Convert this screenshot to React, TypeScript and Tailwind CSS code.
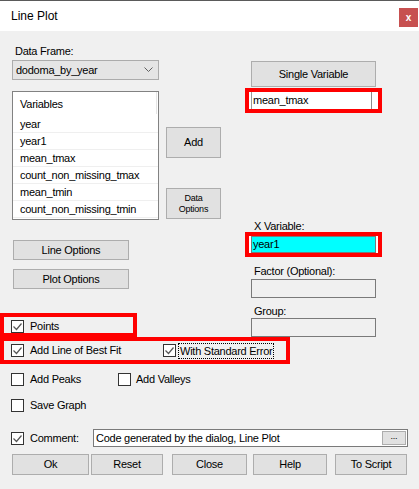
import { ReactNode } from "react";

function Check({ checked }: { checked?: boolean }) {
  return (
    <span className="w-[13px] h-[13px] shrink-0 border border-[#333333] bg-white flex items-center justify-center">
      {checked && (
        <svg width="11" height="11" viewBox="0 0 11 11">
          <path d="M1.5 5.5 L4.5 8.5 L9.5 2.5" fill="none" stroke="#555555" strokeWidth="1.2" />
        </svg>
      )}
    </span>
  );
}

function Btn({ children, className = "" }: { children: ReactNode; className?: string }) {
  return (
    <div
      className={`bg-[#e1e1e1] border border-[#adadad] flex items-center justify-center text-center ${className}`}
    >
      {children}
    </div>
  );
}

const variables = [
  "year",
  "year1",
  "mean_tmax",
  "count_non_missing_tmax",
  "mean_tmin",
  "count_non_missing_tmin",
];

export default function App() {
  return (
    <div className="w-[419px] h-[489px] overflow-hidden bg-[#f0f0f0] border-t border-[#5a5a5a] font-['Liberation_Sans',Arial,sans-serif] text-[11px] leading-[13px] tracking-[-0.25px] text-black">
      {/* title bar */}
      <div className="h-[30px] bg-white flex items-start justify-between pl-[11px] pr-[1px]">
        <span className="text-[12px] leading-[14px] mt-[8px] tracking-normal">Line Plot</span>
        <div className="w-[19px] h-[19px] mt-[7px] bg-[#c75050] flex items-center justify-center text-white text-[10px] font-bold leading-none">
          x
        </div>
      </div>

      {/* top section */}
      <div className="flex">
        {/* left column */}
        <div className="w-[245px] flex flex-col">
          <div className="pl-[15px] mt-[13px] h-[14px] leading-[14px]">Data Frame:</div>
          <div className="ml-[12px] mt-[2px] w-[147px] h-[20px] bg-[#e5e5e5] border border-[#acacac] flex items-center justify-between pl-[3px] pr-[5px]">
            <span>dodoma_by_year</span>
            <svg width="9" height="6" viewBox="0 0 9 6">
              <path d="M0.5 0.5 L4.5 4.5 L8.5 0.5" fill="none" stroke="#606060" strokeWidth="1" />
            </svg>
          </div>

          <div className="ml-[12px] mt-[11px] flex gap-[7px]">
            <div className="w-[147px] h-[129px] bg-white border border-[#828282] flex flex-col">
              <div className="h-[24px] flex items-center justify-between pl-[7px]">
                <span>Variables</span>
                <span className="w-px h-[22px] bg-[#e5e5e5] mr-[1px] self-start" />
              </div>
              {variables.map((v) => (
                <div key={v} className="h-[17px] flex items-center pl-[7px] border-b border-[#efefef]">
                  {v}
                </div>
              ))}
            </div>
            <div className="flex flex-col">
              <Btn className="w-[55px] h-[31px] mt-[36px]">Add</Btn>
              <Btn className="w-[55px] h-[31px] mt-[30px] text-[9px] leading-[11px]">
                Data
                <br />
                Options
              </Btn>
            </div>
          </div>

          <Btn className="ml-[13px] mt-[20px] w-[116px] h-[20px]">Line Options</Btn>
          <Btn className="ml-[13px] mt-[9px] w-[116px] h-[20px]">Plot Options</Btn>

          <div className="mt-[24px] w-[137px] h-[24px] border-4 border-[#ff0000] flex items-end gap-[6px] pl-[7px]">
            <Check checked />
            <span className="leading-[13px]">Points</span>
          </div>
        </div>

        {/* right column */}
        <div className="w-[137px] flex flex-col">
          <Btn className="ml-[6px] mt-[30px] w-[125px] h-[26px]">Single Variable</Btn>
          <div className="mt-[1px] h-[25px] border-4 border-[#ff0000] bg-white flex pl-[2px]">
            <div className="flex-1 flex items-center pl-[1px] border-l border-[#9a9a9a]">mean_tmax</div>
            <div className="w-px bg-[#8a8a8a]" />
            <div className="w-[6px]" />
          </div>

          <div className="pl-[9px] mt-[107px] h-[12px] leading-[12px]">X Variable:</div>
          <div className="h-[25px] border-4 border-[#ff0000] bg-white px-[2px]">
            <div className="h-full bg-[#00ffff] border border-[#7a7a7a] flex items-center pl-[1px]">year1</div>
          </div>

          <div className="pl-[9px] mt-[7px] h-[14px] leading-[14px]">Factor (Optional):</div>
          <div className="ml-[6px] mt-[1px] w-[125px] h-[19px] border border-[#7a7a7a]" />
          <div className="pl-[9px] mt-[7px] h-[13px] leading-[13px]">Group:</div>
          <div className="ml-[6px] w-[125px] h-[19px] border border-[#7a7a7a]" />
        </div>
      </div>

      {/* best fit row */}
      <div className="w-[290px] h-[27px] border-4 border-[#ff0000] flex items-center pl-[7px]">
        <Check checked />
        <span className="ml-[6px]">Add Line of Best Fit</span>
        <div className="ml-[42px] flex items-center">
          <Check checked />
          <span className="ml-[2px] border border-dotted border-black px-[1px] leading-[14px]">
            With Standard Error
          </span>
        </div>
      </div>

      {/* peaks / valleys */}
      <div className="mt-[9px] h-[13px] flex items-center pl-[11px]">
        <Check />
        <span className="ml-[6px] w-[88px]">Add Peaks</span>
        <Check />
        <span className="ml-[5px]">Add Valleys</span>
      </div>

      <div className="mt-[13px] h-[13px] flex items-center pl-[11px]">
        <Check />
        <span className="ml-[6px]">Save Graph</span>
      </div>

      {/* comment */}
      <div className="mt-[17px] h-[18px] flex items-center pl-[11px]">
        <Check checked />
        <span className="ml-[6px] w-[63px]">Comment:</span>
        <div className="w-[315px] h-[18px] bg-white border border-[#7a7a7a] flex items-center justify-between pl-[2px] pr-[1px]">
          <span>Code generated by the dialog, Line Plot</span>
          <Btn className="w-[24px] h-[14px] text-[9px] leading-none pb-[3px]">...</Btn>
        </div>
      </div>

      {/* buttons */}
      <div className="mt-[7px] flex pl-[12px]">
        <Btn className="w-[77px] h-[21px]">Ok</Btn>
        <Btn className="ml-[2px] w-[72px] h-[21px]">Reset</Btn>
        <Btn className="ml-[9px] w-[75px] h-[21px]">Close</Btn>
        <Btn className="ml-[6px] w-[74px] h-[21px]">Help</Btn>
        <Btn className="ml-[8px] w-[72px] h-[21px]">To Script</Btn>
      </div>
    </div>
  );
}
